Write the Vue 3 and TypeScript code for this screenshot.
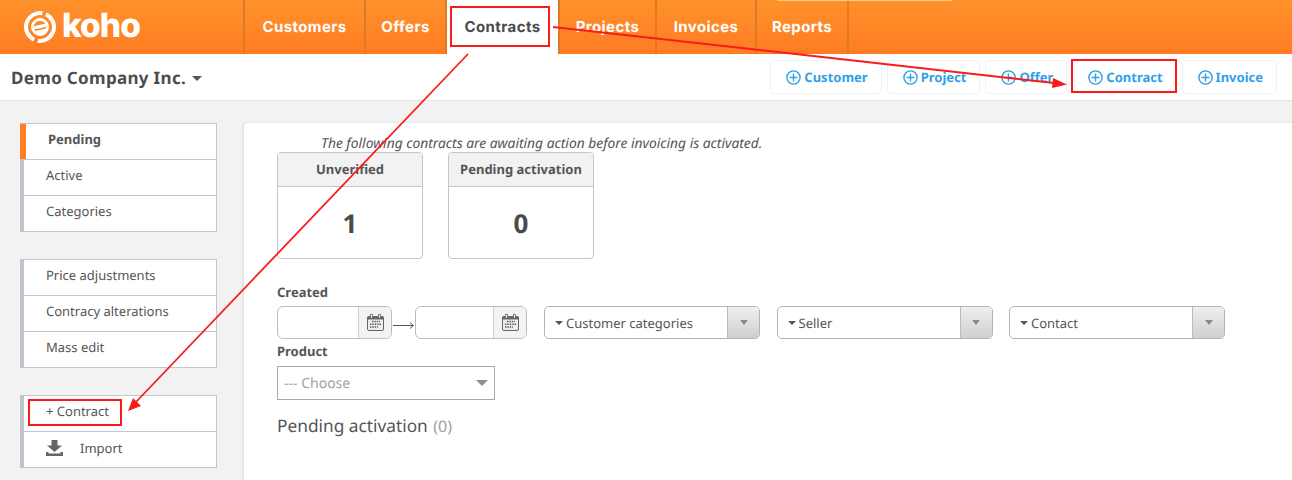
<script setup lang="ts">
const navItems = [
  { label: 'Customers', width: 121 },
  { label: 'Offers', width: 81 },
  { label: 'Contracts', width: 113 },
  { label: 'Projects', width: 97 },
  { label: 'Invoices', width: 100 },
  { label: 'Reports', width: 94 },
]
const quickAdd = ['Customer', 'Project', 'Offer', 'Contract', 'Invoice']
const sideGroups = [
  ['Pending', 'Active', 'Categories'],
  ['Price adjustments', 'Contracy alterations', 'Mass edit'],
  ['+ Contract', 'Import'],
]
const stats = [
  { title: 'Unverified', value: 1 },
  { title: 'Pending activation', value: 0 },
]
const filters = ['Customer categories', 'Seller', 'Contact']
</script>

<template>
  <div class="page">
    <header class="topbar">
      <div class="logo">
        <svg width="32" height="32" viewBox="0 0 32 32" class="logo-mark">
          <path d="M18.3 2.2A14 14 0 0 0 10.1 28.7" fill="none" stroke="#fff" stroke-width="4" />
          <path d="M21.9 3.3A14 14 0 0 1 13.7 29.8" fill="none" stroke="#fff" stroke-width="4" />
          <circle cx="16" cy="16" r="7.6" fill="none" stroke="#fff" stroke-width="2.8" />
          <path d="M8.6 15.6L23 12.2L23.8 15.4L9.2 18.8Z" fill="#fff" />
          <path d="M11 20L22 17.4C21.4 20.6 18.6 22.6 16 22.6C13.8 22.6 12 21.6 11 20Z" fill="#fff" />
        </svg>
        <span class="logo-text">koho</span>
      </div>
      <nav class="nav">
        <a
          v-for="item in navItems"
          :key="item.label"
          class="nav-item"
          :class="{ active: item.label === 'Contracts' }"
          :style="{ width: item.width + 'px' }"
        >{{ item.label }}</a>
      </nav>
      <div class="top-strip"></div>
    </header>

    <div class="subbar">
      <div class="company">Demo Company Inc.<span class="caret"></span></div>
      <div class="quick">
        <a v-for="item in quickAdd" :key="item" class="quick-btn">
          <svg width="15" height="15" viewBox="0 0 15 15">
            <circle cx="7.5" cy="7.5" r="6.6" fill="none" stroke="#2f9fe8" stroke-width="1.4" />
            <path d="M7.5 3.6v7.8M3.6 7.5h7.8" stroke="#2f9fe8" stroke-width="1.4" />
          </svg>
          {{ item }}
        </a>
      </div>
    </div>

    <div class="body">
      <aside class="side">
        <ul v-for="(group, i) in sideGroups" :key="i" class="side-group">
          <li v-for="item in group" :key="item" class="side-item" :class="{ current: item === 'Pending' }">
            <svg v-if="item === 'Import'" class="import-icon" width="17" height="16" viewBox="0 0 17 16">
              <path d="M5.5 0h6v5.5H16L8.5 12L1 5.5h4.5Z" fill="#666" />
              <path d="M0 12h2.5v1.5h12V12H17v4H0Z" fill="#666" />
            </svg>
            {{ item }}
          </li>
        </ul>
      </aside>

      <main class="main">
        <p class="intro">The following contracts are awaiting action before invoicing is activated.</p>
        <div class="stats">
          <div v-for="s in stats" :key="s.title" class="stat">
            <div class="stat-head">{{ s.title }}</div>
            <div class="stat-value">{{ s.value }}</div>
          </div>
        </div>

        <label class="field-label created">Created</label>
        <div class="filters">
          <div class="date">
            <span class="date-input"></span>
            <span class="date-addon">
              <svg width="17" height="17" viewBox="0 0 17 17">
                <rect x="0.5" y="2.5" width="16" height="14" rx="1.5" fill="#eee" stroke="#666" />
                <rect x="0.5" y="2.5" width="16" height="3" fill="#666" />
                <rect x="3.5" y="0.5" width="2" height="3.5" fill="#fff" stroke="#666" stroke-width="0.8" />
                <rect x="11.5" y="0.5" width="2" height="3.5" fill="#fff" stroke="#666" stroke-width="0.8" />
                <path d="M5 7.5h8M3 10.2h11M3 13h8" stroke="#555" stroke-width="1.4" stroke-dasharray="1.4 1" />
              </svg>
            </span>
          </div>
          <svg class="range-arrow" width="23" height="9" viewBox="0 0 23 9">
            <path d="M1 4.5h20M18 1.5l3.5 3l-3.5 3" fill="none" stroke="#555" stroke-width="1" />
          </svg>
          <div class="date second">
            <span class="date-input"></span>
            <span class="date-addon">
              <svg width="17" height="17" viewBox="0 0 17 17">
                <rect x="0.5" y="2.5" width="16" height="14" rx="1.5" fill="#eee" stroke="#666" />
                <rect x="0.5" y="2.5" width="16" height="3" fill="#666" />
                <rect x="3.5" y="0.5" width="2" height="3.5" fill="#fff" stroke="#666" stroke-width="0.8" />
                <rect x="11.5" y="0.5" width="2" height="3.5" fill="#fff" stroke="#666" stroke-width="0.8" />
                <path d="M5 7.5h8M3 10.2h11M3 13h8" stroke="#555" stroke-width="1.4" stroke-dasharray="1.4 1" />
              </svg>
            </span>
          </div>
          <div class="multis">
            <div v-for="f in filters" :key="f" class="multi">
              <span class="multi-text"><i class="mini-caret"></i>{{ f }}</span>
              <span class="multi-btn"><i class="btn-caret"></i></span>
            </div>
          </div>
        </div>

        <label class="field-label product">Product</label>
        <div class="choose">
          <span>--- Choose</span>
          <i class="choose-caret"></i>
        </div>

        <h2 class="section">Pending activation <small>(0)</small></h2>
      </main>
    </div>

    <!-- annotations drawn on top of the screenshot -->
    <svg class="marks" width="1292" height="480" viewBox="0 0 1292 480">
      <g fill="none" stroke="#f91a1a" stroke-width="2">
        <rect x="451" y="7" width="98" height="39" />
        <rect x="1072" y="60" width="104" height="32" />
        <rect x="29" y="400" width="92" height="25" />
      </g>
      <path d="M553 27L1054 83" stroke="#f91a1a" stroke-width="2" />
      <path d="M1067 84.5L1052 88L1053 78Z" fill="#f91a1a" />
      <path d="M468 54L136 402" stroke="#f91a1a" stroke-width="1.8" />
      <path d="M128 411L133 398L141 406Z" fill="#f91a1a" />
    </svg>
  </div>
</template>

<style>
html, body {
  margin: 0;
  background: #f2f2f2;
}
</style>

<style scoped>
.page {
  position: relative;
  width: 1292px;
  height: 480px;
  overflow: hidden;
  background: #f2f2f2;
  font-family: "Noto Sans", sans-serif;
  font-size: 13px;
  color: #555;
  text-rendering: geometricPrecision;
}
.topbar {
  position: relative;
  display: flex;
  height: 54px;
  background: linear-gradient(#ff922b, #ff7b22);
}
.top-strip {
  position: absolute;
  left: 777px;
  top: 0;
  width: 175px;
  height: 1px;
  background: #fbc98d;
}
.logo {
  display: flex;
  align-items: center;
  width: 243px;
  padding-left: 24px;
  box-sizing: border-box;
  color: #fff;
}
.logo-mark {
  margin-right: 6px;
}
.logo-text {
  font-family: Inter, sans-serif;
  font-size: 33.5px;
  font-weight: 800;
  letter-spacing: -1px;
  line-height: 1;
}
.nav {
  display: flex;
}
.nav-item {
  display: flex;
  align-items: center;
  justify-content: center;
  box-sizing: border-box;
  padding-bottom: 2px;
  border-left: 2px solid #dc7a28;
  font-family: Inter, sans-serif;
  font-size: 15px;
  font-weight: 700;
  letter-spacing: 0.4px;
  color: #fff;
}
.nav-item:last-child {
  border-right: 2px solid #dc7a28;
}
.nav-item.active {
  background: #fff;
  color: #4a4a4a;
}
.subbar {
  display: flex;
  justify-content: space-between;
  align-items: center;
  height: 46px;
  padding: 0 15px 0 11px;
  background: #fff;
  border-bottom: 1px solid #e3e3e3;
}
.company {
  display: flex;
  align-items: center;
  font-size: 17px;
  font-weight: 700;
  letter-spacing: 0.32px;
  color: #4d4d4d;
}
.caret {
  margin: 2px 0 0 6px;
  border: 5px solid transparent;
  border-top-color: #555;
  border-bottom: 0;
}
.quick {
  display: flex;
  gap: 5px;
}
.quick-btn {
  display: flex;
  align-items: center;
  gap: 3px;
  height: 34px;
  padding: 0 13px 0 15px;
  box-sizing: border-box;
  border: 1px solid #eef3f8;
  border-radius: 4px;
  font-size: 13px;
  font-weight: 700;
  color: #2f9fe8;
}
.body {
  display: flex;
  padding-top: 22px;
}
.side {
  flex: none;
  width: 197px;
  margin: 0 27px 0 20px;
}
.side-group {
  margin: 0 0 27px;
  padding: 0;
  list-style: none;
  background: #fff;
  border: 1px solid #c3c7cd;
  border-left: 4px solid #bfc4cc;
  border-top: 0;
}
.side-item {
  position: relative;
  display: flex;
  align-items: center;
  box-sizing: border-box;
  height: 36px;
  padding: 0 0 5px 22px;
  border-top: 1px solid #c3c7cd;
}
.side-item:has(.import-icon) {
  padding-bottom: 3px;
}
.side-item.current {
  padding-left: 24px;
  font-weight: 700;
}
.side-item.current::before {
  content: "";
  position: absolute;
  left: -4px;
  top: 0;
  bottom: 0;
  width: 6px;
  background: #ff7f24;
}
.import-icon {
  margin-right: 17px;
}
.main {
  flex: 1;
  height: 400px;
  padding: 12px 33px 0;
  background: #fff;
  border-radius: 4px 0 0 0;
  box-shadow: -1px 0 3px rgba(0, 0, 0, 0.1);
}
.intro {
  margin: 0 0 -1px 44px;
  font-size: 13.8px;
  font-style: italic;
  line-height: 18px;
}
.stats {
  display: flex;
  gap: 25px;
}
.stat {
  width: 146px;
  height: 107px;
  box-sizing: border-box;
  border: 1px solid #c3c7cd;
  border-radius: 4px;
  overflow: hidden;
}
.stat-head {
  height: 33px;
  line-height: 33px;
  text-align: center;
  font-weight: 700;
  background: #f2f2f2;
  border-bottom: 1px solid #c3c7cd;
}
.stat-value {
  height: 72px;
  line-height: 72px;
  text-align: center;
  font-size: 26px;
  font-weight: 700;
  color: #4a4a4a;
}
.field-label {
  display: block;
  font-weight: 700;
  line-height: 18px;
}
.created {
  margin-top: 24px;
}
.filters {
  display: flex;
  align-items: center;
  margin-top: 5px;
}
.date {
  display: flex;
  width: 115px;
  height: 33px;
  box-sizing: border-box;
  border: 1px solid #bdbdbd;
  border-radius: 6px;
  overflow: hidden;
}
.date.second {
  width: 112px;
  margin-right: 17px;
}
.date-input {
  flex: 1;
}
.date-addon {
  display: flex;
  align-items: center;
  justify-content: center;
  box-sizing: border-box;
  width: 33px;
  border-left: 1px solid #cfcfcf;
  background: #f3f3f3;
}
.range-arrow {
  flex: none;
  margin-top: 5px;
}
.multis {
  display: flex;
  gap: 16.5px;
}
.multi {
  display: flex;
  width: 216px;
  height: 33px;
  box-sizing: border-box;
  border: 1px solid #b5b5b5;
  border-radius: 5px;
  overflow: hidden;
}
.multi-text {
  flex: 1;
  display: flex;
  align-items: center;
  padding-left: 10px;
}
.mini-caret {
  margin-right: 3px;
  border: 4px solid transparent;
  border-top-color: #555;
  border-bottom: 0;
}
.multi-btn {
  display: flex;
  align-items: center;
  justify-content: center;
  box-sizing: border-box;
  width: 32px;
  border-left: 1px solid #bbb;
  background: linear-gradient(#efefef, #cfcfcf);
}
.btn-caret {
  border: 4px solid transparent;
  border-top: 5px solid #888;
  border-bottom: 0;
}
.product {
  margin-top: 3px;
}
.choose {
  display: flex;
  align-items: center;
  justify-content: space-between;
  width: 218px;
  height: 34px;
  margin-top: 6px;
  padding: 0 6px;
  box-sizing: border-box;
  border: 1px solid #a9a9a9;
  font-size: 14px;
  color: #a3a3a3;
}
.choose-caret {
  border: 6px solid transparent;
  border-top: 6px solid #8f8f8f;
  border-bottom: 0;
}
.section {
  margin: 14px 0 0;
  font-size: 17.3px;
  font-weight: 400;
  line-height: 24px;
}
.section small {
  margin-left: 1px;
  font-size: 16px;
  color: #a0a0a0;
}
.marks {
  position: absolute;
  left: 0;
  top: 0;
  pointer-events: none;
}
</style>
